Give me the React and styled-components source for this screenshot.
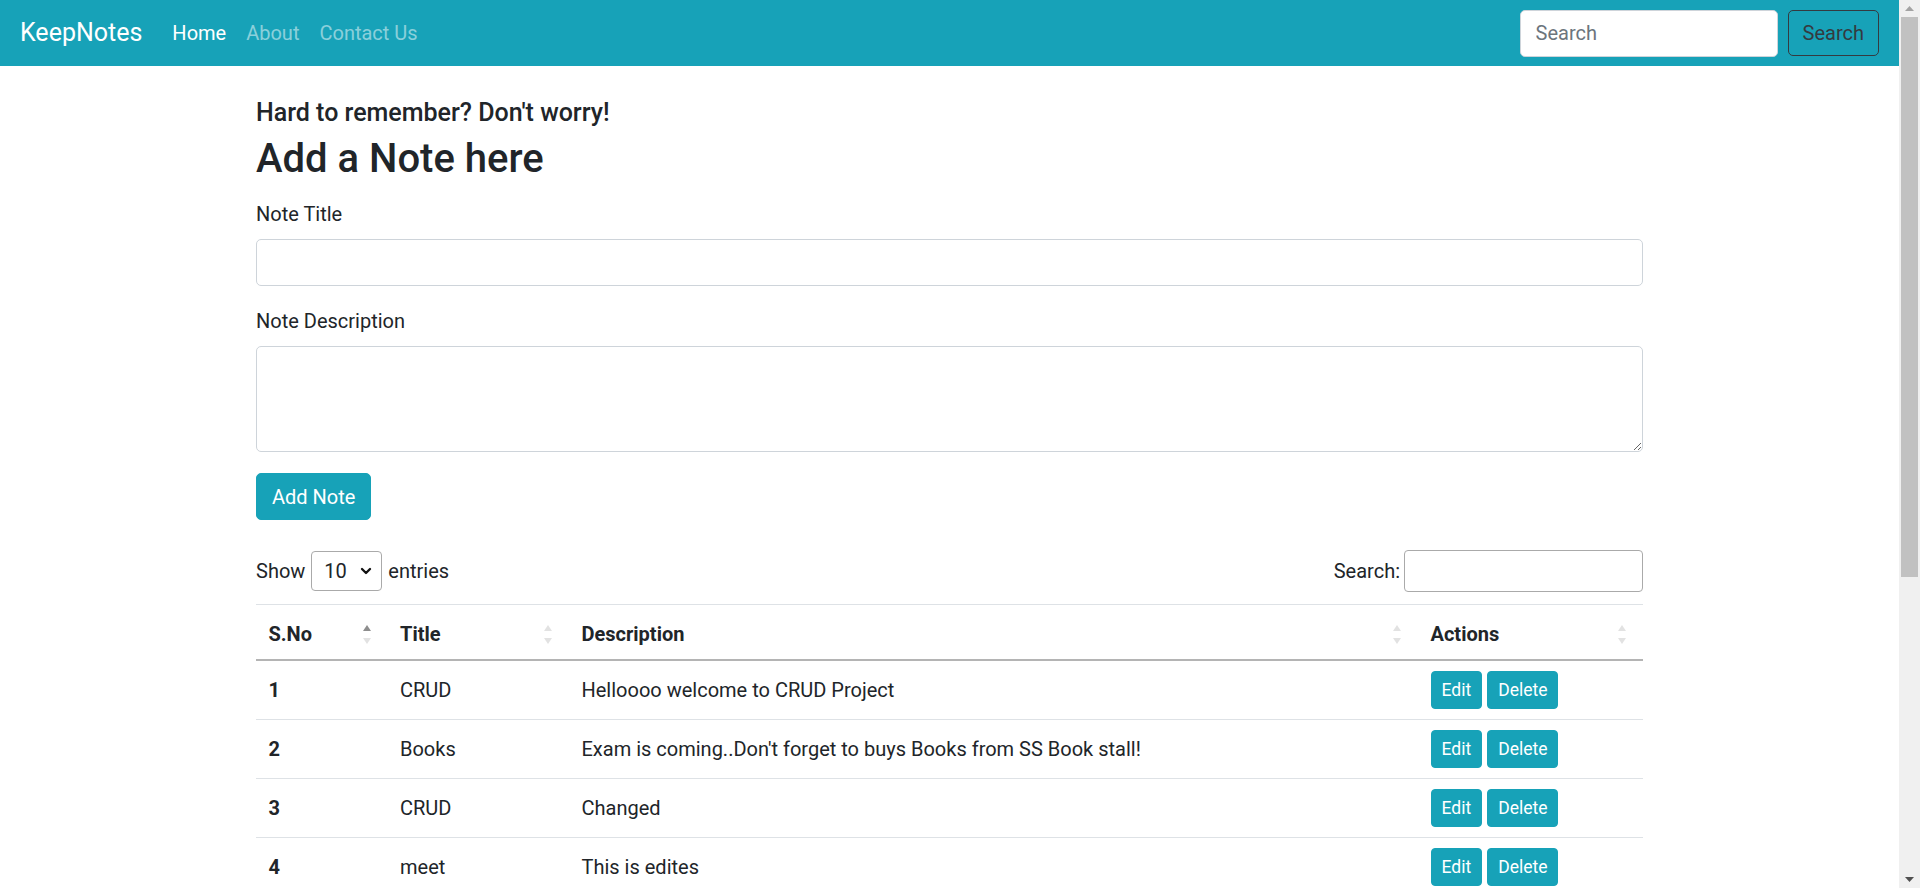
import React, { useState } from 'react';
import styled, { createGlobalStyle } from 'styled-components';
import { ChevronDown } from 'lucide-react';

const GlobalStyle = createGlobalStyle`
  *, *::before, *::after {
    box-sizing: border-box;
  }

  html, body {
    margin: 0;
    height: 100%;
    overflow: hidden;
  }

  body {
    font-family: Roboto, "Liberation Sans", sans-serif;
    font-size: 20px;
    line-height: 1.5;
    color: #212529;
    background: #fff;
  }
`;

// Styled components
const Page = styled.div`
  display: flex;
  height: 100vh;
  overflow: hidden;
`;

const Viewport = styled.div`
  flex: 1;
  min-width: 0;
  overflow: hidden;
`;

// window scrollbar as it shows in the screenshot
const ScrollRail = styled.aside`
  display: flex;
  flex-direction: column;
  width: 21px;
  background: #f0f0f0;
`;

const ScrollArrow = styled.div`
  display: flex;
  align-items: center;
  justify-content: center;
  height: 17px;
`;

const ScrollTrack = styled.div`
  flex: 1;
  padding: 0 2px;
`;

const ScrollThumb = styled.div`
  height: 560px;
  background: #c1c1c1;
`;

const Navbar = styled.nav`
  display: flex;
  align-items: center;
  justify-content: space-between;
  height: 66px;
  padding: 0 20px;
  background-color: #17a2b8;
`;

const NavLeft = styled.div`
  display: flex;
  align-items: center;
`;

const Brand = styled.a`
  font-size: 25px;
  line-height: 1.5;
  color: #fff;
  margin-right: 20px;
  text-decoration: none;
`;

const NavLink = styled.a`
  padding: 0 10px;
  font-size: 20px;
  color: ${p => (p.$active ? '#fff' : 'rgba(255, 255, 255, 0.5)')};
  text-decoration: none;
`;

const SearchForm = styled.form`
  display: flex;
  align-items: center;
`;

const NavInput = styled.input`
  width: 258px;
  height: 47px;
  margin-right: 10px;
  padding: 7px 15px;
  font: inherit;
  font-size: 20px;
  color: #495057;
  border: 1px solid #ced4da;
  border-radius: 5px;
  background: #fff;

  &::placeholder {
    color: #6c757d;
  }
`;

const OutlineButton = styled.button`
  height: 46px;
  padding: 0 14px;
  font: inherit;
  font-size: 20px;
  color: #343a40;
  background: transparent;
  border: 1px solid #343a40;
  border-radius: 5px;
`;

const Container = styled.main`
  width: 1387px;
  margin: 0 auto;
  padding: 32px 0 60px;
`;

const Tagline = styled.h5`
  margin: 0 0 7px;
  font-size: 25px;
  font-weight: 500;
  line-height: 1.2;
`;

const Heading = styled.h2`
  margin: 0 0 16px;
  font-size: 40px;
  font-weight: 500;
  line-height: 1.2;
`;

const FormGroup = styled.div`
  margin-bottom: ${p => (p.$last ? '21px' : '20px')};
`;

const Label = styled.label`
  display: block;
  margin-bottom: 10px;
`;

const TextInput = styled.input`
  display: block;
  width: 100%;
  height: 47px;
  padding: 7px 15px;
  font: inherit;
  border: 1px solid #ced4da;
  border-radius: 5px;
`;

const TextArea = styled.textarea`
  display: block;
  width: 100%;
  height: 106px;
  padding: 7px 15px;
  font: inherit;
  border: 1px solid #ced4da;
  border-radius: 5px;
`;

const InfoButton = styled.button`
  height: ${p => (p.$small ? '38px' : '47px')};
  padding: ${p => (p.$small ? '0 10px' : '0 15px')};
  font: inherit;
  font-size: ${p => (p.$small ? '17.5px' : '20px')};
  color: #fff;
  background-color: #17a2b8;
  border: 1px solid #17a2b8;
  border-radius: ${p => (p.$small ? '4px' : '5px')};
`;

const TableTools = styled.div`
  display: flex;
  align-items: center;
  justify-content: space-between;
  margin-top: 30px;
  margin-bottom: 12px;
`;

const LengthControl = styled.label`
  display: flex;
  align-items: center;
  gap: 6px;
`;

const SelectWrap = styled.span`
  position: relative;
  display: inline-flex;
`;

const Select = styled.select`
  appearance: none;
  width: 71px;
  height: 40px;
  padding: 0 0 0 12px;
  font: inherit;
  color: #212529;
  background: #fff;
  border: 1px solid #aaa;
  border-radius: 4px;
`;

const SelectArrow = styled(ChevronDown)`
  position: absolute;
  right: 8px;
  top: 12px;
  pointer-events: none;
`;

const FilterControl = styled.label`
  display: flex;
  align-items: center;
  gap: 4px;
`;

const FilterInput = styled.input`
  width: 239px;
  height: 42px;
  padding: 4px 8px;
  font: inherit;
  border: 1px solid #aaa;
  border-radius: 4px;
`;

const Table = styled.table`
  width: 100%;
  table-layout: fixed;
  border-collapse: collapse;
  border-top: 1px solid #dee2e6;
`;

const HeadCell = styled.th`
  padding: 14px 0 10px 12.5px;
  text-align: left;
  font-weight: 700;
  border-bottom: 2px solid #b4b4b4;
`;

const HeadInner = styled.div`
  display: flex;
  align-items: center;
  justify-content: space-between;
  padding-right: 17px;
`;

const Cell = styled.td`
  padding: 10px 12.5px;
  height: 59px;
  font-weight: ${p => (p.$bold ? 700 : 400)};
  border-bottom: 1px solid #dee2e6;
  vertical-align: middle;
`;

const Actions = styled.div`
  display: flex;
  gap: 5px;
`;

const TableFooter = styled.div`
  display: flex;
  align-items: center;
  justify-content: space-between;
  margin-top: 14px;
`;

const Pager = styled.div`
  display: flex;
  gap: 4px;
  color: #6c757d;
`;

const PageItem = styled.span`
  padding: 6px 14px;
  border-radius: 4px;
  border: 1px solid ${p => (p.$current ? '#17a2b8' : 'transparent')};
  color: ${p => (p.$current ? '#212529' : '#6c757d')};
`;

const SortIcon = ({ dir }) => (
  <svg width="8" height="19" viewBox="0 0 8 19">
    <polygon points="4,0 8,6 0,6" fill={dir === 'asc' ? '#8e8e8e' : '#e2e2e2'} />
    <polygon points="0,13 8,13 4,19" fill="#e2e2e2" />
  </svg>
);

const Arrow = ({ up }) => (
  <svg width="9" height="5" viewBox="0 0 9 5">
    {up ? (
      <polygon points="4.5,0 9,5 0,5" fill="#a3a3a3" />
    ) : (
      <polygon points="0,0 9,0 4.5,5" fill="#505050" />
    )}
  </svg>
);

const notes = [
  { title: 'CRUD', description: 'Helloooo welcome to CRUD Project' },
  { title: 'Books', description: "Exam is coming..Don't forget to buys Books from SS Book stall!" },
  { title: 'CRUD', description: 'Changed' },
  { title: 'meet', description: 'This is edites' },
  { title: 'Groceries', description: 'Milk, bread and eggs' },
  { title: 'Gym', description: 'Leg day on Friday' },
  { title: 'Project', description: 'Submit the report by Monday' },
];

const columns = [
  { label: 'S.No', width: '131.5px', dir: 'asc' },
  { label: 'Title', width: '181.5px' },
  { label: 'Description', width: '849px' },
  { label: 'Actions', width: '225px' },
];

const App = () => {
  const [entries, setEntries] = useState('10');

  return (
    <Page>
      <GlobalStyle />
      <Viewport>
        <Navbar>
          <NavLeft>
            <Brand href="#">KeepNotes</Brand>
            <NavLink href="#" $active>Home</NavLink>
            <NavLink href="#">About</NavLink>
            <NavLink href="#">Contact Us</NavLink>
          </NavLeft>
          <SearchForm onSubmit={e => e.preventDefault()}>
            <NavInput type="search" placeholder="Search" />
            <OutlineButton type="submit">Search</OutlineButton>
          </SearchForm>
        </Navbar>

        <Container>
          <Tagline>Hard to remember? Don't worry!</Tagline>
          <Heading>Add a Note here</Heading>
          <form onSubmit={e => e.preventDefault()}>
            <FormGroup>
              <Label htmlFor="title">Note Title</Label>
              <TextInput id="title" type="text" />
            </FormGroup>
            <FormGroup $last>
              <Label htmlFor="desc">Note Description</Label>
              <TextArea id="desc" rows={3} />
            </FormGroup>
            <InfoButton type="submit">Add Note</InfoButton>
          </form>

          <TableTools>
            <LengthControl>
              Show
              <SelectWrap>
                <Select value={entries} onChange={e => setEntries(e.target.value)}>
                  <option value="10">10</option>
                  <option value="25">25</option>
                  <option value="50">50</option>
                  <option value="100">100</option>
                </Select>
                <SelectArrow size={16} strokeWidth={3.5} color="#111" />
              </SelectWrap>
              entries
            </LengthControl>
            <FilterControl>
              Search:
              <FilterInput type="search" />
            </FilterControl>
          </TableTools>

          <Table>
            <colgroup>
              {columns.map(c => (
                <col key={c.label} style={{ width: c.width }} />
              ))}
            </colgroup>
            <thead>
              <tr>
                {columns.map(c => (
                  <HeadCell key={c.label}>
                    <HeadInner>
                      {c.label}
                      <SortIcon dir={c.dir} />
                    </HeadInner>
                  </HeadCell>
                ))}
              </tr>
            </thead>
            <tbody>
              {notes.map((note, index) => (
                <tr key={index}>
                  <Cell $bold>{index + 1}</Cell>
                  <Cell>{note.title}</Cell>
                  <Cell>{note.description}</Cell>
                  <Cell>
                    <Actions>
                      <InfoButton $small>Edit</InfoButton>
                      <InfoButton $small>Delete</InfoButton>
                    </Actions>
                  </Cell>
                </tr>
              ))}
            </tbody>
          </Table>

          <TableFooter>
            <span>Showing 1 to {notes.length} of {notes.length} entries</span>
            <Pager>
              <PageItem>Previous</PageItem>
              <PageItem $current>1</PageItem>
              <PageItem>Next</PageItem>
            </Pager>
          </TableFooter>
        </Container>
      </Viewport>

      <ScrollRail>
        <ScrollArrow><Arrow up /></ScrollArrow>
        <ScrollTrack>
          <ScrollThumb />
        </ScrollTrack>
        <ScrollArrow><Arrow /></ScrollArrow>
      </ScrollRail>
    </Page>
  );
};

export default App;
